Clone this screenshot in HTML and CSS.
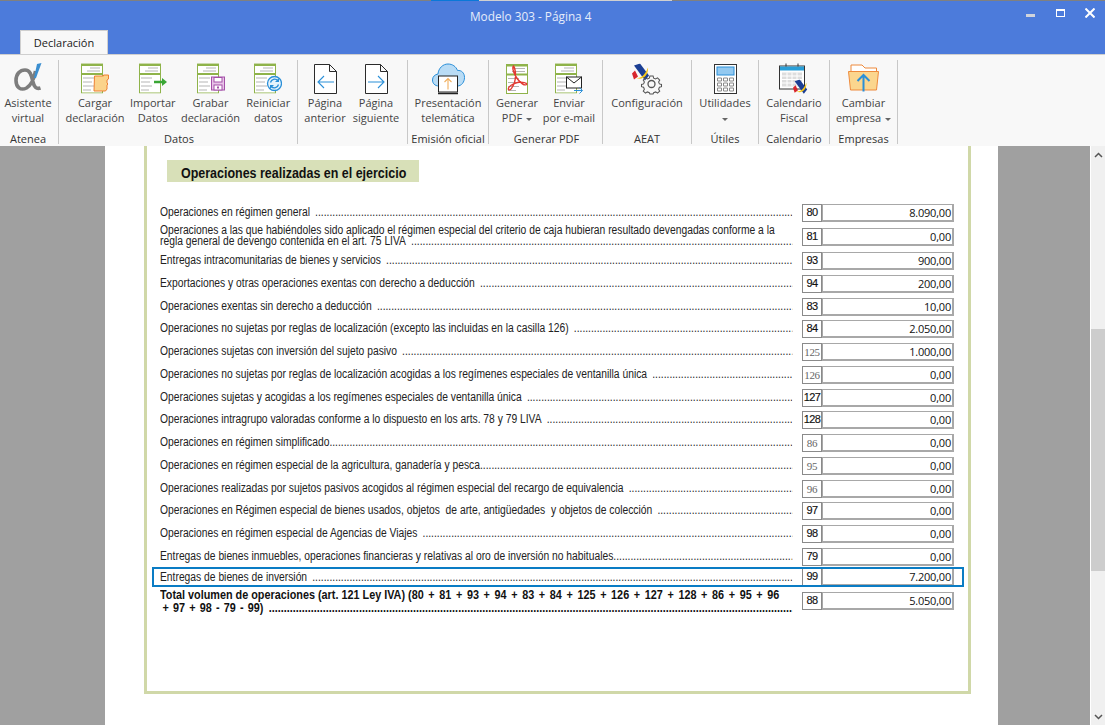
FILE: index.html
```html
<!DOCTYPE html>
<html lang="es">
<head>
<meta charset="utf-8">
<title>Modelo 303 - Página 4</title>
<link rel="stylesheet" href="styles.css">
</head>
<body>
<svg class="defs" width="0" height="0" aria-hidden="true">
  <symbol id="doc" viewBox="0 0 22 30">
    <rect x="0.5" y="0.5" width="21" height="29" fill="#fff" stroke="#8fb34a"/>
    <path d="M0 0h22v2.5H0zM0 9.5h22v2H0z" fill="#8fb34a"/>
    <path d="M9 4.5h10M6 7.5h13" stroke="#b5b5b5" fill="none"/>
    <path d="M2 14.5h11M2 18.5h9M2 22.5h11M2 26.5h8" stroke="#b5b5b5" fill="none"/>
  </symbol>
  <symbol id="aeat" viewBox="0 0 18 18">
    <path d="M2 2l6-2 9 12-4 5z" fill="#1c3f94"/>
    <path d="M1 12c5 5 11 2 15-8 1 8-7 16-15 8z" fill="#f5c518"/>
    <path d="M0 10l3-3 3 6-4 3z" fill="#d8262c"/>
  </symbol>
</svg>

<div class="chrome-line"><span class="cl-a"></span><span class="cl-b"></span><span class="cl-c"></span><span class="cl-d"></span></div>

<header class="titlebar">
  <div class="title-row">
    <span class="title">Modelo 303 - Página 4</span>
    <div class="win-btns">
      <span class="win-min"></span>
      <span class="win-max"></span>
      <svg class="win-close" width="10" height="10" viewBox="0 0 10 10"><path d="M0.5 0.5l9 9M9.5 0.5l-9 9" stroke="#fff" stroke-width="2"/></svg>
    </div>
  </div>
  <div class="tab">Declaración</div>
</header>

<nav class="ribbon">
  <section class="group g-atenea">
    <div class="btns">
      <div class="btn w54">
        <svg class="ico" width="40" height="32" viewBox="0 0 40 32">
          <path d="M27.500 8C26 16 23.500 22 18.500 25 12.500 28 8 24 8 17.500 8 11 12 7 17 7c5.500 0 6.500 6 8 12 1 4.500 3 7.500 7.500 6" fill="none" stroke="#7d7d7d" stroke-width="3.600"/>
          <path d="M29 1l4.500-1-5.500 15h-2z" fill="#3b8fd0"/>
        </svg>
        <span>Asistente</span><span>virtual</span>
      </div>
    </div>
    <div class="glabel">Atenea</div>
  </section>

  <section class="group g-datos">
    <div class="btns">
      <div class="btn w58">
        <svg class="ico" width="28" height="31" viewBox="0 0 28 31">
          <use href="#doc" width="22" height="30"/>
          <path d="M13.5 12.5h9v-1h5v4l-1.500 1v3l1 1-1 1v4l-1.500 2h-11.500z" fill="#fbd38b" stroke="#ee8030"/>
        </svg>
        <span>Cargar</span><span>declaración</span>
      </div>
      <div class="btn w58">
        <svg class="ico" width="28" height="31" viewBox="0 0 28 31">
          <use href="#doc" width="22" height="30"/>
          <path d="M15 18.500h9" stroke="#3aa635" stroke-width="2.500" fill="none"/>
          <path d="M23 14.500l5 4-5 4z" fill="#3aa635"/>
        </svg>
        <span>Importar</span><span>Datos</span>
      </div>
      <div class="btn w58">
        <svg class="ico" width="28" height="31" viewBox="0 0 28 31">
          <use href="#doc" width="22" height="30"/>
          <rect x="14.500" y="13.500" width="13" height="13" fill="#e8c4e8" stroke="#a450a8"/>
          <rect x="17" y="14" width="8" height="4.500" fill="#fff" stroke="#a450a8"/>
          <rect x="17" y="21.500" width="8" height="5" fill="#fff" stroke="#a450a8"/>
          <rect x="20" y="23" width="2" height="2" fill="#a450a8"/>
        </svg>
        <span>Grabar</span><span>declaración</span>
      </div>
      <div class="btn w58">
        <svg class="ico" width="28" height="31" viewBox="0 0 28 31">
          <use href="#doc" width="22" height="30"/>
          <circle cx="20.500" cy="20" r="7" fill="#e6f3fc" stroke="#2a8fd8" stroke-width="1.300"/>
          <path d="M16.500 19a4.300 4.300 0 0 1 7.300-2M24.500 21a4.300 4.300 0 0 1-7.300 2" fill="none" stroke="#2a8fd8" stroke-width="1.300"/>
          <path d="M25 14.500v4h-4zM16 25.500v-4h4z" fill="#2a8fd8"/>
        </svg>
        <span>Reiniciar</span><span>datos</span>
      </div>
    </div>
    <div class="glabel">Datos</div>
  </section>

  <section class="group g-pagina">
    <div class="btns">
      <div class="btn w51">
        <svg class="ico" width="23" height="30" viewBox="0 0 23 30">
          <path d="M0.500 0.500h15l7 7v22h-22zM15.500 0.500v7h7" fill="#fff" stroke="#2b2b2b"/>
          <path d="M20 18H5M10 12l-6 6 6 6" fill="none" stroke="#2a8fd8" stroke-width="1.100"/>
        </svg>
        <span>Página</span><span>anterior</span>
      </div>
      <div class="btn w51">
        <svg class="ico" width="23" height="30" viewBox="0 0 23 30">
          <path d="M0.500 0.500h15l7 7v22h-22zM15.500 0.500v7h7" fill="#fff" stroke="#2b2b2b"/>
          <path d="M3 18h15M13 12l6 6-6 6" fill="none" stroke="#2a8fd8" stroke-width="1.100"/>
        </svg>
        <span>Página</span><span>siguiente</span>
      </div>
    </div>
    <div class="glabel">&nbsp;</div>
  </section>

  <section class="group g-emision">
    <div class="btns">
      <div class="btn w80">
        <svg class="ico" width="33" height="31" viewBox="0 0 33 31">
          <path d="M7 22.500C2.500 22.500 0.500 19.500 0.500 16.500 0.500 13 3 11 6 10.500 6.500 4.500 11 0.500 16 0.500c4.500 0 8 2.500 9.500 6.500 4-.5 7 2.500 7 7 0 4.500-3 8.500-7 8.500z" fill="#b9dcf5" stroke="#2a8fd8"/>
          <rect x="6.500" y="12.500" width="19" height="16" fill="#fff" stroke="#222"/>
          <path d="M6 30h20" stroke="#222" stroke-width="1.500"/>
          <path d="M16 26V15M12.500 18.500l3.500-3.500 3.500 3.500" fill="none" stroke="#f0b060" stroke-width="1.100"/>
        </svg>
        <span>Presentación</span><span>telemática</span>
      </div>
    </div>
    <div class="glabel">Emisión oficial</div>
  </section>

  <section class="group g-pdf">
    <div class="btns">
      <div class="btn w52">
        <svg class="ico" width="22" height="30" viewBox="0 0 22 30">
          <use href="#doc" width="22" height="30"/>
          <path d="M7.500 2c-2 2 1 9 4 13 3 4 7 7 9 5.500 1-1.500-4-3-9-2-4 1-10 4-9 7 1.500 1.500 4-1.500 6-7 1-3 2-12-1-16.500z" fill="none" stroke="#e23a32" stroke-width="1.400"/>
        </svg>
        <span>Generar</span><span class="caret">PDF</span>
      </div>
      <div class="btn w52">
        <svg class="ico" width="29" height="31" viewBox="0 0 29 31">
          <use href="#doc" width="22" height="30"/>
          <rect x="11.500" y="13.500" width="15" height="11" fill="#fff" stroke="#222"/>
          <path d="M11.500 13.500l7.500 6 7.500-6" fill="none" stroke="#222"/>
          <path d="M19 27h8M24.500 24l3 3-3 3" fill="none" stroke="#2a8fd8"/>
        </svg>
        <span>Enviar</span><span>por e-mail</span>
      </div>
    </div>
    <div class="glabel">Generar PDF</div>
  </section>

  <section class="group g-aeat">
    <div class="btns">
      <div class="btn w88">
        <svg class="ico" width="31" height="31" viewBox="0 0 31 31">
          <use href="#aeat" width="18" height="18"/>
          <g fill="none" stroke="#555" stroke-width="1.300">
            <circle cx="19.500" cy="20.500" r="3.500"/>
            <path d="M17.500 10.500h4l.7 2.700 2.400 1 2.400-1.400 2.800 2.800-1.400 2.400 1 2.400 2.600.7v2.800l-2.600.7-1 2.400 1.400 2.400-2.800 2.400-2.400-1.400-2.400 1-.7 1.500h-4l-.7-1.500-2.400-1-2.400 1.400-2.800-2.400 1.400-2.400-1-2.400-2.600-.7v-2.800l2.600-.7 1-2.400-1.400-2.400 2.800-2.800 2.400 1.400 2.400-1z" transform="translate(3.900 4.100) scale(.8)"/>
          </g>
        </svg>
        <span>Configuración</span><span>&nbsp;</span>
      </div>
    </div>
    <div class="glabel">AEAT</div>
  </section>

  <section class="group g-util">
    <div class="btns">
      <div class="btn w66">
        <svg class="ico" width="23" height="30" viewBox="0 0 23 30">
          <rect x="0.500" y="0.500" width="22" height="29" fill="#fff" stroke="#333"/>
          <rect x="3" y="3" width="17" height="8" fill="#93c9f0" stroke="#2a8fd8"/>
          <path d="M3.500 14h4v3h-4zM9.500 14h4v3h-4zM15.500 14h4v3h-4zM3.500 19h4v3h-4zM9.500 19h4v3h-4zM15.500 19h4v3h-4zM3.500 24h4v3h-4zM9.500 24h4v3h-4zM15.500 24h4v3h-4z" fill="none" stroke="#8a8a8a"/>
        </svg>
        <span>Utilidades</span><span class="caret"></span>
      </div>
    </div>
    <div class="glabel">Útiles</div>
  </section>

  <section class="group g-cal">
    <div class="btns">
      <div class="btn w70">
        <svg class="ico" width="30" height="31" viewBox="0 0 30 31">
          <rect x="0.500" y="2.500" width="25" height="23" fill="#fff" stroke="#333"/>
          <rect x="1" y="3" width="24" height="4" fill="#2a9fd8"/>
          <path d="M7 0v3M19 0v3" stroke="#333"/>
          <path d="M3 9h20v14H3z" fill="#ddd"/>
          <path d="M3 12.500h20M3 16h20M3 19.500h20M8 9v14M13 9v14M18 9v14" stroke="#fff"/>
          <use href="#aeat" x="14" y="16" width="15" height="15"/>
        </svg>
        <span>Calendario</span><span>Fiscal</span>
      </div>
    </div>
    <div class="glabel">Calendario</div>
  </section>

  <section class="group g-emp">
    <div class="btns">
      <div class="btn w68">
        <svg class="ico" width="31" height="29" viewBox="0 0 31 29">
          <path d="M3 7V0.500h11l3 3h11.500V7" fill="#fff" stroke="#ee8a3c"/>
          <path d="M0.500 7h30l-2 18.500h-26z" fill="#fbd68e" stroke="#ee8a3c"/>
          <path d="M15.500 27V11M9.500 16.500l6-6 6 6" fill="none" stroke="#2a8fd8" stroke-width="2"/>
        </svg>
        <span>Cambiar</span><span class="caret">empresa</span>
      </div>
    </div>
    <div class="glabel">Empresas</div>
  </section>
</nav>

<main class="workspace">
  <div class="side"></div>
  <div class="page">
    <div class="doc">
      <h2 class="band"><span>Operaciones realizadas en el ejercicio</span></h2>
      <div class="rows">
        <div class="row r-first">
          <div class="lbl"><div class="ln"><span>Operaciones en régimen general</span><i class="leader"></i></div></div>
          <b class="num">80</b><output class="val">8.090,00</output>
        </div>
        <div class="row r-two">
          <div class="lbl two"><div class="ln">Operaciones a las que habiéndoles sido aplicado el régimen especial del criterio de caja hubieran resultado devengadas conforme a la</div><div class="ln"><span>regla general de devengo contenida en el art. 75 LIVA</span><i class="leader"></i></div></div>
          <b class="num">81</b><output class="val">0,00</output>
        </div>
        <div class="row">
          <div class="lbl"><div class="ln"><span>Entregas intracomunitarias de bienes y servicios</span><i class="leader"></i></div></div>
          <b class="num">93</b><output class="val">900,00</output>
        </div>
        <div class="row">
          <div class="lbl"><div class="ln"><span>Exportaciones y otras operaciones exentas con derecho a deducción</span><i class="leader"></i></div></div>
          <b class="num">94</b><output class="val">200,00</output>
        </div>
        <div class="row">
          <div class="lbl"><div class="ln"><span>Operaciones exentas sin derecho a deducción</span><i class="leader"></i></div></div>
          <b class="num">83</b><output class="val">10,00</output>
        </div>
        <div class="row">
          <div class="lbl"><div class="ln"><span>Operaciones no sujetas por reglas de localización (excepto las incluidas en la casilla 126)</span><i class="leader"></i></div></div>
          <b class="num">84</b><output class="val">2.050,00</output>
        </div>
        <div class="row">
          <div class="lbl"><div class="ln"><span>Operaciones sujetas con inversión del sujeto pasivo</span><i class="leader"></i></div></div>
          <b class="num light">125</b><output class="val">1.000,00</output>
        </div>
        <div class="row">
          <div class="lbl"><div class="ln"><span>Operaciones no sujetas por reglas de localización acogidas a los regímenes especiales de ventanilla única</span><i class="leader"></i></div></div>
          <b class="num light">126</b><output class="val">0,00</output>
        </div>
        <div class="row">
          <div class="lbl"><div class="ln"><span>Operaciones sujetas y acogidas a los regímenes especiales de ventanilla única</span><i class="leader"></i></div></div>
          <b class="num">127</b><output class="val">0,00</output>
        </div>
        <div class="row">
          <div class="lbl"><div class="ln"><span>Operaciones intragrupo valoradas conforme a lo dispuesto en los arts. 78 y 79 LIVA</span><i class="leader"></i></div></div>
          <b class="num">128</b><output class="val">0,00</output>
        </div>
        <div class="row">
          <div class="lbl"><div class="ln"><span>Operaciones en régimen simplificado</span><i class="leader tight"></i></div></div>
          <b class="num light">86</b><output class="val">0,00</output>
        </div>
        <div class="row">
          <div class="lbl"><div class="ln"><span>Operaciones en régimen especial de la agricultura, ganadería y pesca</span><i class="leader tight"></i></div></div>
          <b class="num light">95</b><output class="val">0,00</output>
        </div>
        <div class="row">
          <div class="lbl"><div class="ln"><span>Operaciones realizadas por sujetos pasivos acogidos al régimen especial del recargo de equivalencia</span><i class="leader"></i></div></div>
          <b class="num light">96</b><output class="val">0,00</output>
        </div>
        <div class="row">
          <div class="lbl"><div class="ln"><span>Operaciones en Régimen especial de bienes usados, objetos  de arte, antigüedades  y objetos de colección</span><i class="leader"></i></div></div>
          <b class="num">97</b><output class="val">0,00</output>
        </div>
        <div class="row">
          <div class="lbl"><div class="ln"><span>Operaciones en régimen especial de Agencias de Viajes</span><i class="leader"></i></div></div>
          <b class="num">98</b><output class="val">0,00</output>
        </div>
        <div class="row r-short">
          <div class="lbl"><div class="ln"><span>Entregas de bienes inmuebles, operaciones financieras y relativas al oro de inversión no habituales</span><i class="leader tight"></i></div></div>
          <b class="num">79</b><output class="val">0,00</output>
        </div>
        <div class="row r-mark">
          <div class="lbl"><div class="ln"><span>Entregas de bienes de inversión</span><i class="leader"></i></div></div>
          <b class="num">99</b><output class="val">7.200,00</output>
        </div>
        <div class="row r-total">
          <div class="lbl two bold"><div class="ln"><span>Total volumen de operaciones (art. 121 Ley IVA) <span class="sums">(80 + 81 + 93 + 94 + 83 + 84 + 125 + 126 + 127 + 128 + 86 + 95 + 96</span></span></div><div class="ln indent"><span>+ 97 + 98 - 79 - 99)</span><i class="leader"></i></div></div>
          <b class="num">88</b><output class="val">5.050,00</output>
        </div>
      </div>
    </div>
  </div>
  <div class="side right"></div>
  <div class="scrollbar">
    <svg class="sb-arrow" width="9" height="6" viewBox="0 0 9 6"><path d="M1 5l3.500-3.500L8 5" fill="none" stroke="#555" stroke-width="1.500"/></svg>
    <div class="sb-thumb"></div>
    <svg class="sb-arrow" width="9" height="6" viewBox="0 0 9 6"><path d="M1 1l3.500 3.500L8 1" fill="none" stroke="#555" stroke-width="1.500"/></svg>
  </div>
</main>
</body>
</html>
```
FILE: styles.css
```css
*, *::before, *::after { box-sizing: border-box; }
html, body { margin: 0; padding: 0; }
body {
  width: 1105px;
  height: 725px;
  overflow: hidden;
  display: flex;
  flex-direction: column;
  font-family: "Open Sans", "Noto Sans", sans-serif;
  background: #fff;
}
.defs { position: absolute; }

.chrome-line { display: flex; height: 1px; flex: none; background: #808080; }
.cl-a { width: 431px; }
.cl-b { width: 48px; background: #0a78d8; }
.cl-c { width: 193px; background: #d0d0d0; }

.titlebar {
  flex: none;
  height: 53px;
  background: #4c7bdb;
  display: flex;
  flex-direction: column;
  justify-content: space-between;
}
.title-row { display: flex; justify-content: space-between; height: 29px; }
.title {
  margin: 7px 0 0 470px;
  font-size: 11.800px;
  line-height: 16px;
  color: #e6ecfa;
}
.win-btns { display: flex; align-items: flex-start; padding: 7px 10px 0 0; }
.win-min { width: 9px; height: 3px; margin: 6px 21px 0 0; background: #d0d4dc; }
.win-max { width: 9px; height: 8px; margin: 1px 20px 0 0; border: 1px solid #fff; border-top-width: 2px; }
.tab {
  width: 88px;
  height: 24px;
  margin-left: 20px;
  background: #f8f8f8;
  border: 1px solid #cfcfcf;
  border-bottom: 0;
  font-size: 11px;
  line-height: 24px;
  text-align: center;
  color: #1a1a1a;
}

.ribbon {
  flex: none;
  height: 92px;
  padding: 5px 0 3px;
  display: flex;
  background: #f8f8f8;
  border-top: 1px solid #cfcfcf;
  color: #444;
  font-size: 11px;
  line-height: 15px;
}
.group {
  height: 84px;
  display: flex;
  flex-direction: column;
  border-right: 1px solid #c8c8c8;
}
.g-atenea { width: 59px; }
.g-datos { width: 239px; padding-left: 7px; }
.g-pagina { width: 110px; padding-left: 1.500px; }
.g-emision { width: 81px; }
.g-pdf { width: 114px; padding-left: 2px; }
.g-aeat { width: 89px; }
.g-util { width: 67px; }
.g-cal { width: 71px; }
.g-emp { width: 68px; }

.btns { display: flex; height: 71px; padding-top: 3px; }
.g-atenea .btn { margin-left: 1px; }
.g-atenea .glabel { padding-right: 2px; }
.g-datos .glabel { padding-right: 5px; }
.btn {
  display: flex;
  flex-direction: column;
  align-items: center;
  white-space: nowrap;
}
.btn > span { height: 15px; }
.ico { height: 32px; flex: none; }
.w51 { width: 51px; }
.w52 { width: 52px; }
.w54 { width: 54px; }
.w58 { width: 58px; }
.w66 { width: 66px; }
.w68 { width: 67px; }
.w70 { width: 70px; }
.w80 { width: 80px; }
.w88 { width: 88px; }
.caret::after {
  content: "";
  display: inline-block;
  margin-left: 4px;
  vertical-align: middle;
  border: 3px solid transparent;
  border-top: 3px solid #666;
  border-bottom: 0;
}
.caret:empty::after { margin-left: 0; }
.glabel { height: 13px; text-align: center; color: #333; white-space: nowrap; }

.workspace { flex: 1; min-height: 0; display: flex; }
.side { width: 105px; flex: none; background: #a0a0a0; }
.side.right { width: 92px; }
.page { width: 893px; flex: none; background: #fff; padding-left: 39px; }
.doc {
  width: 827px;
  height: 548px;
  border: 3px solid #d0d8a8;
  border-top: 0;
  padding: 14px 0 0 20px;
}
.band {
  margin: 0;
  width: 252px;
  height: 22px;
  padding-left: 14px;
  background: #d8e0b8;
  color: #111;
  font: bold 14.500px/26px "Liberation Sans", sans-serif;
  white-space: nowrap;
}
.band span { display: inline-block; transform: scaleX(0.860); transform-origin: left; }
.rows { margin: 22px 0 0 -7px; }
.row {
  position: relative;
  height: 22.750px;
  display: flex;
  align-items: flex-start;
}
.r-first { height: 23.500px; }
.r-two { height: 24.500px; }
.r-short { height: 20.250px; }
.r-mark { height: 24px; }
.r-mark .lbl { margin-top: 1px; }
.r-mark::after {
  content: "";
  position: absolute;
  left: -8px;
  top: -1px;
  width: 812px;
  height: 20px;
  border: 2px solid #0a7cc4;
}
.lbl {
  flex: none;
  width: 736.600px;
  margin-right: -94.600px;
  transform: scaleX(0.858);
  transform-origin: left;
  font: 12px/17px "Liberation Sans", sans-serif;
  color: #222;
  white-space: pre;
}
.ln { display: flex; align-items: baseline; }
.two { line-height: 11px; margin-top: -3px; }
.bold { font-weight: bold; font-size: 12.500px; line-height: 13px; color: #111; transform: scaleX(0.866); width: 730px; margin-right: -88px; }
.sums { word-spacing: 1.880px; }
.indent { padding-left: 3px; word-spacing: 1.350px; }
.leader {
  flex: 1;
  min-width: 0;
  overflow: hidden;
  margin-left: 6px;
  font-style: normal;
}
.leader.tight { margin-left: 0; }
.leader::after {
  content: "........................................................................................................................................................................................................................................................";
}
.num {
  width: 20px;
  height: 18px;
  flex: none;
  border: 1px solid #8a8a8a;
  background: #fff;
  font: 11px/15px "Liberation Sans", sans-serif;
  letter-spacing: -0.600px;
  -webkit-text-stroke: 0.150px #111;
  color: #111;
  text-align: center;
}
.num.light { font: 11px/16px "Liberation Serif", serif; color: #666; -webkit-text-stroke: 0; letter-spacing: -0.300px; }
.val {
  display: block;
  width: 132px;
  height: 18px;
  flex: none;
  border: 1px solid #a8a8a8;
  border-width: 1px 2px 2px 1px;
  background: #fff;
  font-size: 11px;
  letter-spacing: -0.200px;
  line-height: 15px;
  padding-right: 1px;
  text-align: right;
  color: #111;
}

.scrollbar {
  flex: 1;
  display: flex;
  flex-direction: column;
  align-items: center;
  background: #f0f0f0;
  border-left: 1px solid #fff;
  padding: 6px 0 5px;
}
.sb-arrow { flex: none; }
.sb-thumb {
  align-self: stretch;
  height: 242px;
  margin: 171px 0 143px;
  background: #cdcdcd;
}
```
